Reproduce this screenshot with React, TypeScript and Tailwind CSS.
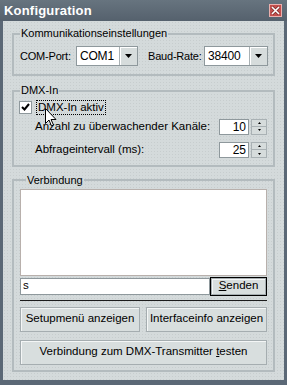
import React from 'react';

const font = { fontFamily: '"Liberation Sans", Arial, sans-serif' };

const Arrow = () => (
  <svg width="7" height="4" viewBox="0 0 7 4"><path d="M0 0h7L3.5 4z" fill="#000" /></svg>
);

const Combo = ({ value, w }: { value: string; w: string }) => (
  <div className={`flex h-[20px] ${w} border border-[#8e989c] bg-white`}>
    <div className="flex-1 flex items-center pl-[3px] text-[12px] text-black">{value}</div>
    <div className="w-[18px] flex items-center justify-center bg-[#d6dcdc] border-l border-[#a9b1b4] shadow-[inset_1px_1px_0_#fff]">
      <Arrow />
    </div>
  </div>
);

const Spin = ({ value }: { value: string }) => (
  <div className="flex items-center gap-[2px] h-[16px]">
    <div className="w-[30px] h-[16px] border border-[#8e989c] bg-white flex items-center justify-end pr-[2px] text-[12px]">{value}</div>
    <div className="flex flex-col w-[16px] h-[16px]">
      <div className="flex-1 flex items-center justify-center bg-[#d6dcdc] border border-[#a9b1b4]">
        <svg width="3" height="2" viewBox="0 0 3 2"><path d="M1.5 0L3 2H0z" fill="#000" /></svg>
      </div>
      <div className="flex-1 flex items-center justify-center bg-[#d6dcdc] border border-t-0 border-[#a9b1b4]">
        <svg width="3" height="2" viewBox="0 0 3 2"><path d="M0 0h3L1.5 2z" fill="#000" /></svg>
      </div>
    </div>
  </div>
);

const Btn = ({ children, className = '' }: { children: React.ReactNode; className?: string }) => (
  <div className={`flex items-center justify-center whitespace-nowrap bg-[#d8dede] border border-[#a5adb0] shadow-[inset_1px_1px_0_#f4f6f6] text-[11.5px] text-black ${className}`}>
    {children}
  </div>
);

const Group = ({ title, children, className = '' }: { title: string; children: React.ReactNode; className?: string }) => (
  <fieldset className={`border-2 border-[#b3bbbe] mx-[9px] ${className}`}>
    <legend className="ml-[6px] px-[1px] text-[11px] leading-[13px] text-black">{title}</legend>
    {children}
  </fieldset>
);

export default function App() {
  return (
    <div className="w-[287px] h-[385px] bg-[#5b6876] flex flex-col overflow-hidden" style={font}>
      {/* title bar */}
      <div className="h-[21px] shrink-0 flex items-center justify-between pl-[4px] pr-[5px] bg-gradient-to-b from-[#67747f] to-[#55616d]">
        <span className="text-white font-bold text-[13px] tracking-[0.2px]">Konfiguration</span>
        <div className="w-[13px] h-[13px] bg-[#c24f4d] border border-[#eab0ae] flex items-center justify-center">
          <svg width="9" height="9" viewBox="0 0 9 9">
            <path d="M1 1l7 7M8 1L1 8" stroke="#7a2a28" strokeWidth="3" />
            <path d="M1 1l7 7M8 1L1 8" stroke="#fff" strokeWidth="1.6" />
          </svg>
        </div>
      </div>

      {/* body */}
      <div className="flex-1 min-h-0 overflow-hidden mx-[3px] mb-[5px] bg-[#d4dadb] bg-[radial-gradient(#c7cdce_0.6px,transparent_0.8px)] bg-[length:3px_3px] pt-[6px] flex flex-col text-black text-[11.5px] whitespace-nowrap">
        <Group title="Kommunikationseinstellungen" className="pt-[6px] pb-[8px]">
          <div className="flex items-center pl-[6px] text-[11px] tracking-[-0.2px]">
            <span className="w-[56px]">COM-Port:</span>
            <Combo value="COM1" w="w-[62px]" />
            <span className="ml-[10px] w-[56px]">Baud-Rate:</span>
            <Combo value="38400" w="w-[64px]" />
          </div>
        </Group>

        <Group title="DMX-In" className="mt-[8px] pt-[2px] pb-[6px]">
          <div className="relative flex items-center pl-[5px] h-[16px]">
            <div className="w-[13px] h-[13px] bg-white border border-[#8e989c] flex items-center justify-center">
              <svg width="9" height="8" viewBox="0 0 9 8"><path d="M1 4l2.5 2.5L8 1" stroke="#000" strokeWidth="2" fill="none" /></svg>
            </div>
            <span className="ml-[4px] px-[1px] border border-dotted border-black leading-[13px]">DMX-In aktiv</span>
            <svg className="absolute left-[31px] top-[9px]" width="12" height="19" viewBox="0 0 12 19">
              <path d="M0.5 0.5v15l3.5-3.5 2.5 6 2-1-2.5-5.5h5z" fill="#fff" stroke="#000" strokeWidth="1" />
            </svg>
          </div>
          <div className="flex items-center justify-between pl-[21px] pr-[6px] mt-[3px]">
            <span>Anzahl zu überwachender Kanäle:</span>
            <Spin value="10" />
          </div>
          <div className="flex items-center justify-between pl-[21px] pr-[6px] mt-[6px]">
            <span>Abfrageintervall (ms):</span>
            <Spin value="25" />
          </div>
        </Group>

        <Group title="Verbindung" className="mt-[7px] pt-[2px] pb-[5px] px-[6px]">
          <div className="h-[87px] bg-white border border-[#b8b0ac]" />
          <div className="flex items-center mt-[1px] h-[19px]">
            <div className="flex-1 h-[17px] bg-white border border-[#8e989c] flex items-center pl-[2px]">s</div>
            <div className="w-[57px] h-[19px] border border-black">
              <Btn className="h-full">
                <span><span className="underline">S</span>enden</span>
              </Btn>
            </div>
          </div>
          <div className="mt-[4px] h-[1px] bg-[#1c1c1c]" />
          <div className="flex justify-between mt-[6px]">
            <Btn className="w-[120px] h-[25px]">Setupmenü anzeigen</Btn>
            <Btn className="w-[121px] h-[25px]">Interfaceinfo anzeigen</Btn>
          </div>
          <Btn className="mt-[8px] h-[25px]">
            <span>Verbindung zum DMX-Transmitter <span className="underline">t</span>esten</span>
          </Btn>
        </Group>
      </div>
    </div>
  );
}
